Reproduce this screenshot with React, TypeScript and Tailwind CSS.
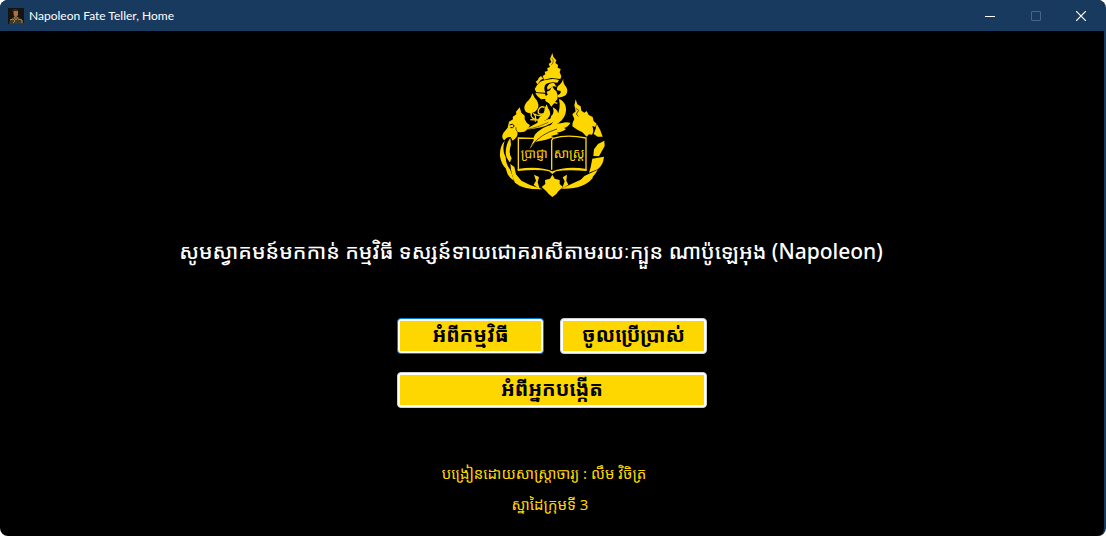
import React from "react";

const khmer =
  "font-['Segoe_UI','Leelawadee_UI','Noto_Sans_Khmer','Khmer_OS','Noto_Sans',sans-serif]";

function Emblem() {
  return (
    <svg viewBox="0 0 375 480" className="h-40 w-[125px]" fill="#ffd700" role="img" aria-label="Emblem">
      {/* crown flame */}
      <path d="M187 24 L190 36 L199 46 L196 54 L204 60 L203 68 L212 72 L209 82 L214 94 L211 102 L184 99 L162 104 L158 93 L166 88 L164 80 L173 78 L172 69 L180 66 L176 57 L184 51 L180 42 Z" />
      <path d="M185 39 Q195 48 184 60" fill="none" stroke="#000" strokeWidth="1.5" />
      {/* crest and curls beneath the flame */}
      <path d="M153 93 L160 101 Q149 105 143 118 L137 110 Q146 105 146 99 Z" />
      <path d="M141 121 Q151 105 173 104 Q190 100 207 105 L202 113 Q180 110 168 117 Q159 126 166 143 L139 142 L134 132 Z" />
      <path d="M136 144 L164 146 L172 161 L153 163 Q141 155 136 144 Z" />
      <path d="M220 101 Q218 114 229 127 Q236 139 227 151 Q215 159 202 157 L204 150 Q214 146 212 138 L201 136 Q199 124 209 119 Q217 112 220 101 Z" />
      <path d="M186 123 L192 133 L199 139 L203 151 L202 163 L193 173 L184 185 L177 175 L166 168 L166 154 L173 149 L170 140 L180 136 Z" />
      <path d="M171 127 Q176 113 192 114 L200 126 Q188 120 182 129 L173 135 Z" />
      {/* leaf and tendrils */}
      <path d="M127 145 L134 158 Q147 171 145 186 Q139 202 127 203 L125 213 Q129 218 136 221 L132 224 Q121 220 121 205 Q103 203 103 188 Q103 177 116 166 Q124 158 127 145 Z" />
      <path d="M207 162 Q221 166 227 184 Q232 207 215 226 Q200 241 178 247 Q192 228 201 213 Q213 190 207 162 Z" />
      <path d="M170 178 L174 189 Q188 207 172 222 Q156 229 145 243 Q138 227 150 215 Q164 206 164 190 Z M188 187 Q209 196 204 216 Q195 233 170 238 Q182 222 184 212 Q195 206 188 187 Z" />
      <path d="M164 187 Q151 181 145 196 Q142 210 157 207 Q149 217 134 207 M145 243 Q153 229 144 225 L121 224 M202 175 Q188 168 183 182 M130 205 Q140 213 136 230" fill="none" stroke="#ffd700" strokeWidth="4" />
      {/* dragon head on the left */}
      <path d="M89 187 L94 203 L104 212 L104 223 L110 233 L120 241 L112 254 Q99 265 82 260 Q86 276 68 287 L62 276 Q50 275 43 286 Q32 278 40 264 L53 248 L57 230 L69 223 L68 216 L79 208 L78 200 Z" />
      <path d="M59 240 Q68 234 73 243 Q69 250 61 248" fill="none" stroke="#000" strokeWidth="3" />
      <path d="M82 260 Q76 254 78 247" fill="none" stroke="#000" strokeWidth="2" />
      {/* tail flame on the right */}
      <path d="M257 163 L262 178 L272 184 L274 197 L283 203 L290 198 L296 210 L308 216 L311 229 L319 235 L316 246 L307 243 Q313 258 306 269 L297 268 L290 275 L277 262 L262 254 L247 244 L248 233 L253 222 L247 208 L257 199 L253 181 Z" />
      <path d="M257 190 L266 196 L259 207 L265 214" fill="none" stroke="#000" strokeWidth="2" />
      {/* side wreaths */}
      <path d="M44 287 Q28 305 30 334 Q34 358 47 370 Q53 398 72 407 Q65 385 60 372 Q48 360 47 337 Q35 316 44 287 Z" />
      <path d="M61 279 Q47 297 47 324 Q49 342 60 352 L65 340 Q54 324 63 299 Z" />
      <path d="M61 357 L73 366 L78 388 L94 407 L120 420 L158 433 Q98 434 75 413 Q64 391 61 357 Z" />
      <path d="M320 236 L331 256 L338 275 L323 275 L311 267 L317 251 Z M343 287 L344 303 L327 334 L310 333 L312 313 L324 297 Z M342 335 Q340 359 323 373 L297 383 L302 367 L307 341 Z M323 374 Q312 398 291 406 L267 410 L283 393 Z" />
      <path d="M308 386 Q288 398 262 409 L213 431 Q280 434 308 399 Z" />
      <path d="M132 389 L147 396 L143 412 L150 434 L131 419 L138 407 Z M231 389 L218 397 L224 409 L217 430 L235 419 L229 407 Z" />
      {/* bottom diamond */}
      <path d="M187 389 L194 401 L209 405 L209 417 L219 426 L205 439 L199 447 L187 456 L176 447 L169 439 L155 426 L166 417 L165 405 L180 401 Z" />
      {/* open book */}
      <path d="M132 280 L85 279 L85 374 M185 374 L185 286 L189 280 Q231 267 288 279 L288 374" fill="none" stroke="#ffd700" strokeWidth="4" />
      <path d="M83 372 Q148 362 187 379 Q229 362 290 372 L290 378 Q231 373 198 379 L187 387 L177 379 Q146 372 83 378 Z" />
      {/* quill */}
      <path d="M241 233 Q226 230 217 234 Q169 237 143 260 Q128 273 131 286 L124 300 L119 312 L129 299 L137 290 Q164 288 191 277 L183 273 L207 267 L200 263 Q223 259 228 252 L222 249 Q236 244 241 233 Z" />
      <path d="M125 302 Q153 266 201 252" fill="none" stroke="#000" strokeWidth="2" />
      <path d="M198 223 Q181 218 163 227 Q145 229 130 240 L104 255 L130 251 Q172 248 198 223 Z" />
      <path d="M110 254 Q145 247 175 232" fill="none" stroke="#000" strokeWidth="1.5" />
      <text x="92" y="338" fontSize="38" className={khmer}>ប្រាជ្ញា</text>
      <text x="191" y="338" fontSize="38" className={khmer}>សាស្ត្រ</text>
    </svg>
  );
}

function AppIcon() {
  return (
    <svg viewBox="0 0 16 16" className="size-4" aria-hidden="true">
      <rect width="16" height="16" fill="#17130f" />
      <path d="M1 16 L2 12 L6 9 L10 9 L14 12 L16 16 Z" fill="#41392a" />
      <path d="M5 3 Q8 0 10 3 L10 7 L8 10 L6 8 Z" fill="#aa7041" />
      <path d="M5 5 L4 2 L7 1 L10 2 L9 3 L6 3 Z" fill="#39251c" />
      <path d="M2 12 L5 11 L7 13 L5 15 M10 11 L14 12 L14 15 M6 9 L8 12 L10 9" fill="none" stroke="#b38b41" />
    </svg>
  );
}

function TitleBar() {
  return (
    <header className="flex h-[31px] items-center bg-[#193a5f] pl-2 text-white">
      <AppIcon />
      <h1 className="ml-[5px] flex-1 font-['Segoe_UI',Lato,sans-serif] text-[12px]">
        Napoleon Fate Teller, Home
      </h1>
      <button aria-label="Minimize" className="grid h-full w-[46px] place-items-center">
        <svg viewBox="0 0 10 10" className="size-[10px]"><path d="M0 5.5H10" stroke="white" /></svg>
      </button>
      <button aria-label="Maximize" disabled className="grid h-full w-[45px] place-items-center">
        <svg viewBox="0 0 10 10" className="size-[10px]"><rect x=".5" y=".5" width="9" height="9" rx=".5" fill="none" stroke="#4b6581" /></svg>
      </button>
      <button aria-label="Close" className="grid h-full w-[46px] place-items-center">
        <svg viewBox="0 0 10 10" className="size-[10px]"><path d="M0 0L10 10M10 0L0 10" stroke="white" strokeWidth="1.2" /></svg>
      </button>
    </header>
  );
}

function GoldButton({ children, focused = false, wide = false }: { children: React.ReactNode; focused?: boolean; wide?: boolean }) {
  return (
    <button
      className={`h-9 rounded-[4px] border p-[2px] ${wide ? "col-span-2" : ""} ${focused ? "border-[#0078d4]" : "border-[#d0d0d0]"} bg-white`}
    >
      <span className="flex h-full items-center justify-center bg-[#ffd700] pb-[2px] text-[20px] leading-none font-bold text-black">
        {children}
      </span>
    </button>
  );
}

export default function App() {
  return (
    <div className="min-h-screen bg-white">
      <div className={`flex min-h-screen flex-col overflow-hidden rounded-lg border-r-2 border-[#193a5f] bg-black ${khmer}`}>
        <TitleBar />
        <main className="flex flex-1 flex-col items-center pt-[14px]">
          <Emblem />
          <h2 className="mt-7 pr-[42px] text-[21px] leading-9 font-medium whitespace-nowrap text-white">
            សូមស្វាគមន៍មកកាន់ កម្មវិធី ទស្សន៍ទាយជោគរាសីតាមរយៈក្បួន ណាប៉ូឡេអុង (Napoleon)
          </h2>
          <nav className="mt-[49px] grid w-[310px] grid-cols-2 gap-x-4 gap-y-[18px]">
            <GoldButton focused>អំពីកម្មវិធី</GoldButton>
            <GoldButton>ចូលប្រើប្រាស់</GoldButton>
            <GoldButton wide>អំពីអ្នកបង្កើត</GoldButton>
          </nav>
          <footer className="mt-[50px] flex flex-col items-center text-[15px] leading-[31px] text-[#ffd700]">
            <p className="pr-4">បង្រៀនដោយសាស្ត្រាចារ្យ : លឹម វិចិត្រ</p>
            <p className="pr-1">ស្នាដៃក្រុមទី 3</p>
          </footer>
        </main>
      </div>
    </div>
  );
}
